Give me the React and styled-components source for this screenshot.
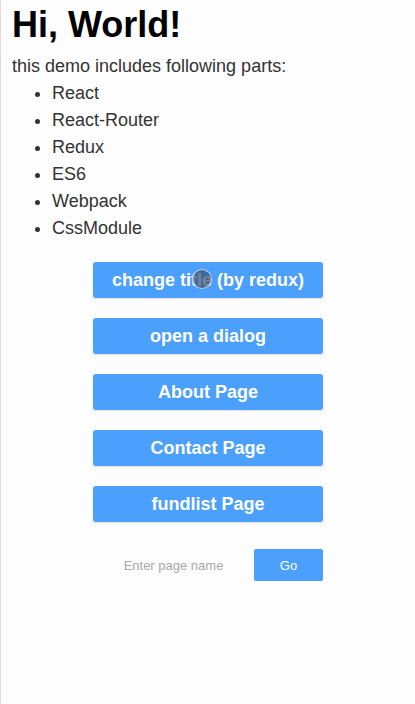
import React, { useState } from 'react';
import styled, { createGlobalStyle } from 'styled-components';

const GlobalStyle = createGlobalStyle`
  html, body {
    margin: 0;
    padding: 0;
    background: #fdfdfd;
  }
  body {
    font-family: "Liberation Sans", Arial, sans-serif;
    color: #333;
  }
`;

const parts = ['React', 'React-Router', 'Redux', 'ES6', 'Webpack', 'CssModule'];
const pages = ['About Page', 'Contact Page', 'fundlist Page'];

const App = () => {
  const [title, setTitle] = useState('Hi, World!');
  const [page, setPage] = useState('');

  return (
    <>
      <GlobalStyle />
      <Page>
        <Title>{title}</Title>
        <Intro>this demo includes following parts:</Intro>
        <PartList>
          {parts.map((p) => (
            <li key={p}>{p}</li>
          ))}
        </PartList>
        <Actions>
          <ActionButton onClick={() => setTitle('Hi, Redux!')}>
            change title (by redux)
            <TouchDot />
          </ActionButton>
          <ActionButton>open a dialog</ActionButton>
          {pages.map((p) => (
            <ActionButton key={p}>{p}</ActionButton>
          ))}
          <GoRow>
            <PageInput
              placeholder="Enter page name"
              value={page}
              onChange={(e) => setPage(e.target.value)}
            />
            <GoButton>Go</GoButton>
          </GoRow>
        </Actions>
      </Page>
    </>
  );
};

const Page = styled.div`
  min-height: 704px;
  box-sizing: border-box;
  border-left: 1px solid #dcdcdc;
  padding: 0 11px;
`;

const Title = styled.h1`
  margin: 0;
  padding-top: 4px;
  font-size: 36px;
  line-height: 42px;
  font-weight: bold;
  color: #000;
`;

const Intro = styled.p`
  margin: 7px 0 0;
  font-size: 18px;
  line-height: 27px;
`;

const PartList = styled.ul`
  margin: 0;
  padding-left: 40px;
  font-size: 18px;
  line-height: 27px;
`;

const Actions = styled.div`
  display: flex;
  flex-direction: column;
  align-items: center;
  gap: 20px;
  margin: 20px -11px 0;
`;

const ActionButton = styled.button`
  position: relative;
  width: 230px;
  height: 36px;
  border: none;
  border-radius: 3px;
  background: #4aa0fc;
  box-shadow: 0 1px 2px rgba(0, 0, 0, 0.12);
  color: #fff;
  font-family: "Liberation Sans", Arial, sans-serif;
  font-size: 18px;
  font-weight: bold;
  cursor: pointer;
`;

const TouchDot = styled.span`
  position: absolute;
  left: 99px;
  top: 7px;
  width: 20px;
  height: 20px;
  box-sizing: border-box;
  border-radius: 50%;
  border: 1px solid rgba(220, 230, 245, 0.8);
  background: rgba(60, 80, 110, 0.7);
`;

const GoRow = styled.div`
  display: flex;
  width: 230px;
  height: 32px;
  margin-top: 7px;
`;

const PageInput = styled.input`
  flex: 1;
  min-width: 0;
  border: none;
  background: transparent;
  text-align: center;
  font-family: "Liberation Sans", Arial, sans-serif;
  font-size: 13px;
  outline: none;
  &::placeholder {
    color: #a9a9a9;
  }
`;

const GoButton = styled.button`
  width: 69px;
  border: none;
  border-radius: 2px;
  background: #4aa0fc;
  color: #fff;
  font-family: "Liberation Sans", Arial, sans-serif;
  font-size: 13px;
  cursor: pointer;
`;

export default App;
